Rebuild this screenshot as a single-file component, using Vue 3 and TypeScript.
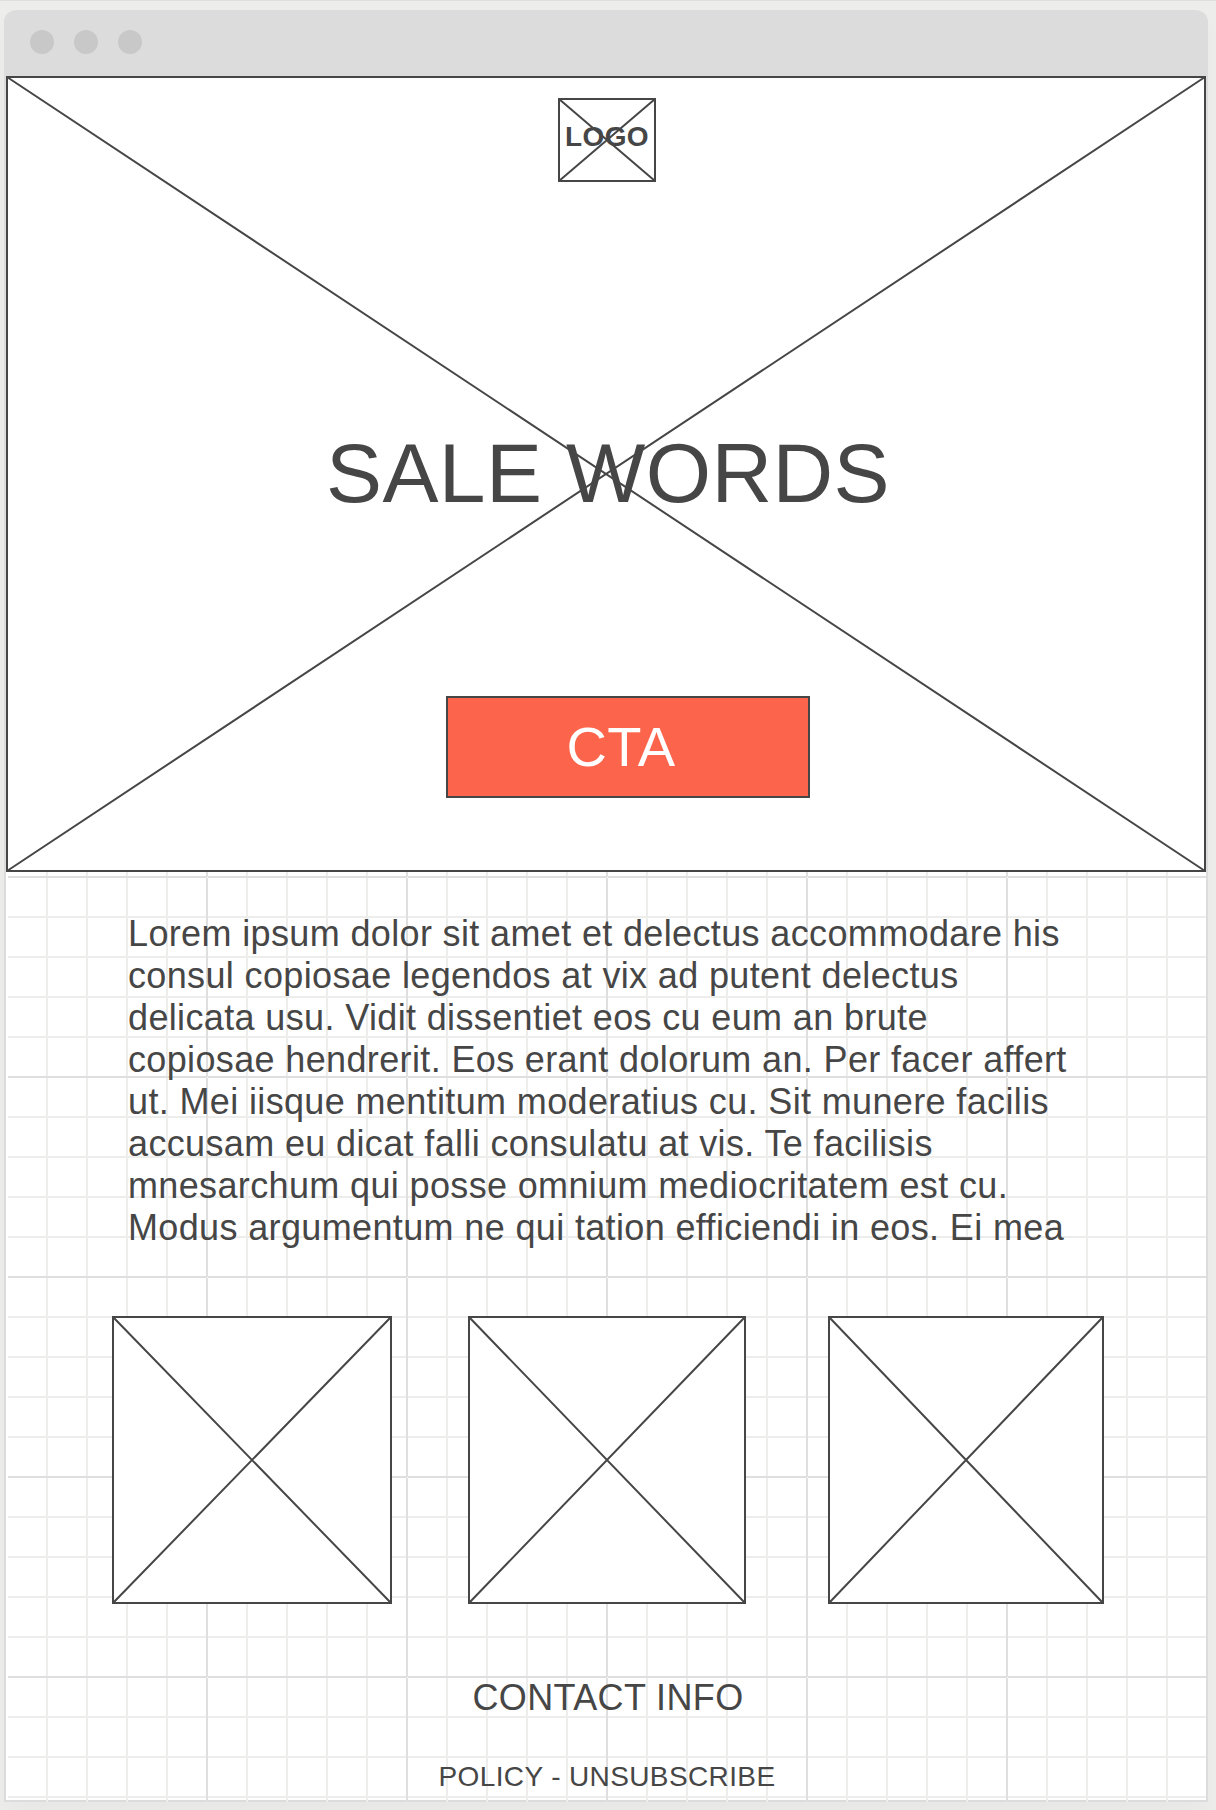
<script setup lang="ts">
const dots = [1, 2, 3]

interface Thumb {
  width: number
  height: number
}

const thumbs: Thumb[] = [
  { width: 280, height: 288 },
  { width: 278, height: 288 },
  { width: 276, height: 288 },
]

const lines: string[] = [
  'Lorem ipsum dolor sit amet et delectus accommodare his',
  'consul copiosae legendos at vix ad putent delectus',
  'delicata usu. Vidit dissentiet eos cu eum an brute',
  'copiosae hendrerit. Eos erant dolorum an. Per facer affert',
  'ut. Mei iisque mentitum moderatius cu. Sit munere facilis',
  'accusam eu dicat falli consulatu at vis. Te facilisis',
  'mnesarchum qui posse omnium mediocritatem est cu.',
  'Modus argumentum ne qui tation efficiendi in eos. Ei mea',
]

const minor = [40, 80, 120, 160]
</script>

<template>
  <div class="page">
    <div class="window">
      <header class="bar">
        <span v-for="d in dots" :key="d" class="dot"></span>
      </header>

      <section class="hero">
        <svg class="cross" viewBox="0 0 1200 796">
          <path d="M1 1 1199 795M1199 1 1 795" />
        </svg>
        <div class="logo">
          <svg class="cross" viewBox="0 0 98 84">
            <path d="M1 1 97 83M97 1 1 83" />
          </svg>
          <span class="logo-text">LOGO</span>
        </div>
        <h1 class="title">SALE WORDS</h1>
        <button class="cta" type="button"><span>CTA</span></button>
      </section>

      <main class="content">
        <svg class="grid" width="1198" height="930">
          <defs>
            <pattern id="squares" x="198" y="4" width="200" height="200" patternUnits="userSpaceOnUse">
              <g fill="#ededec">
                <rect v-for="m in minor" :key="'v' + m" :x="m" y="0" width="2" height="200" />
                <rect v-for="m in minor" :key="'h' + m" x="0" :y="m" width="200" height="2" />
              </g>
              <path d="M0 0H200V2H2V200H0Z" fill="#dfdfdf" />
              <rect x="1" y="1" width="1" height="1" fill="#fff" />
            </pattern>
          </defs>
          <rect width="1198" height="930" fill="url(#squares)" />
        </svg>

        <p class="copy">
          <span v-for="line in lines" :key="line" class="line">{{ line }}</span>
        </p>

        <div class="thumbs">
          <svg v-for="(t, i) in thumbs" :key="i" class="thumb" :width="t.width" :height="t.height">
            <rect x="1" y="1" :width="t.width - 2" :height="t.height - 2" />
            <path :d="`M1 1 ${t.width - 1} ${t.height - 1}M${t.width - 1} 1 1 ${t.height - 1}`" />
          </svg>
        </div>

        <footer class="footer">
          <div class="contact">CONTACT INFO</div>
          <div class="policy">POLICY - UNSUBSCRIBE</div>
        </footer>
      </main>
    </div>
  </div>
</template>

<style>
body {
  margin: 0;
  background: #ededeb;
}
</style>

<style scoped>
.page {
  box-sizing: border-box;
  width: 1216px;
  height: 1810px;
  padding: 9px 8px 8px 4px;
  border-top: 1px solid #dededd;
  overflow: hidden;
  background: #ededeb;
  font-family: 'Liberation Sans', Arial, sans-serif;
  color: #464646;
  letter-spacing: 0.38px;
}
.window {
  box-sizing: border-box;
  width: 1204px;
  height: 1792px;
  border: 2px solid #dcdcdc;
  border-top: 0;
  border-radius: 12px 12px 0 0;
  background: #fff;
  box-shadow: 0 16px 24px rgba(0, 0, 0, 0.025);
}
.bar {
  box-sizing: border-box;
  display: flex;
  gap: 20px;
  height: 66px;
  padding: 20px 24px;
  border-radius: 10px 10px 0 0;
  background: #dcdcdc;
}
.dot {
  width: 24px;
  height: 24px;
  border-radius: 50%;
  background: #c8c8c8;
}
.hero {
  position: relative;
  box-sizing: border-box;
  display: flex;
  flex-direction: column;
  align-items: center;
  height: 796px;
  padding-top: 20px;
  border: 2px solid #464646;
  background: #fff;
}
.cross {
  position: absolute;
  inset: -2px;
}
.cross path,
.thumb path {
  fill: none;
  stroke: #464646;
  stroke-width: 2;
}
.logo {
  position: relative;
  box-sizing: border-box;
  display: flex;
  justify-content: center;
  width: 98px;
  height: 84px;
  margin-left: 2px;
  padding-top: 21px;
  border: 2px solid #464646;
}
.logo-text {
  position: relative;
  font-size: 28px;
  font-weight: 700;
  line-height: 32px;
}
.title {
  position: relative;
  margin: 243px 0 0 4px;
  font-size: 84px;
  font-weight: 400;
  line-height: 96px;
  white-space: nowrap;
}
.cta {
  position: relative;
  box-sizing: border-box;
  display: flex;
  align-items: center;
  justify-content: center;
  width: 364px;
  height: 102px;
  margin: 175px 0 0 44px;
  padding: 0 14px 0 0;
  border: 2px solid #464646;
  background: #fc644b;
  color: #fff;
  font-family: inherit;
  font-size: 56px;
  line-height: 64px;
  letter-spacing: inherit;
}
.content {
  position: relative;
}
.grid {
  position: absolute;
  top: 0;
  left: 2px;
}
.copy {
  position: relative;
  margin: 0;
  padding: 41px 0 0 122px;
  font-size: 36px;
  line-height: 42px;
  letter-spacing: 0.36px;
  white-space: nowrap;
}
.line {
  display: block;
}
.thumbs {
  position: relative;
  display: flex;
  justify-content: space-between;
  padding: 67px 102px 0 106px;
}
.thumb {
  display: block;
}
.thumb rect {
  fill: #fff;
  stroke: #464646;
  stroke-width: 2;
}
.thumb:nth-child(2) {
  margin-left: -6px;
}
.footer {
  position: relative;
  display: flex;
  flex-direction: column;
  align-items: center;
  padding-top: 73px;
}
.contact {
  margin-left: 4px;
  font-size: 36px;
  line-height: 42px;
}
.policy {
  margin: 42px 0 0 2px;
  font-size: 28px;
  line-height: 32px;
}
</style>
